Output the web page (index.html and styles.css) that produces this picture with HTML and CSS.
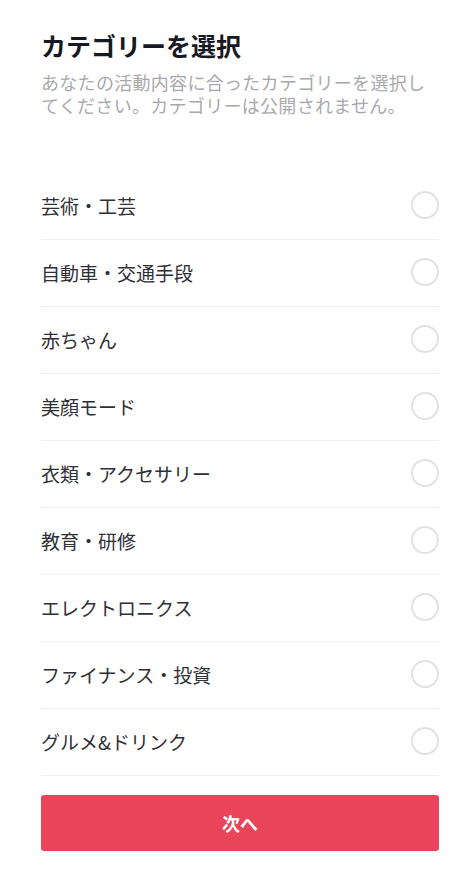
FILE: index.html
```html
<!DOCTYPE html>
<html lang="ja">
<head>
<meta charset="utf-8">
<link rel="stylesheet" href="styles.css">
</head>
<body>
<div class="page">
  <h1 class="title">カテゴリーを選択</h1>
  <p class="subtitle">あなたの活動内容に合ったカテゴリーを選択してください。カテゴリーは公開されません。</p>
  <ul class="list">
    <li class="row"><span class="label">芸術・工芸</span><span class="radio"></span></li>
    <li class="row"><span class="label">自動車・交通手段</span><span class="radio"></span></li>
    <li class="row"><span class="label">赤ちゃん</span><span class="radio"></span></li>
    <li class="row"><span class="label">美顔モード</span><span class="radio"></span></li>
    <li class="row"><span class="label">衣類・アクセサリー</span><span class="radio"></span></li>
    <li class="row"><span class="label">教育・研修</span><span class="radio"></span></li>
    <li class="row"><span class="label">エレクトロニクス</span><span class="radio"></span></li>
    <li class="row"><span class="label">ファイナンス・投資</span><span class="radio"></span></li>
    <li class="row"><span class="label">グルメ&amp;ドリンク</span><span class="radio"></span></li>
  </ul>
  <button class="next">次へ</button>
</div>
</body>
</html>
```
FILE: styles.css
```css
* { box-sizing: border-box; }
html, body {
  margin: 0;
  padding: 0;
  background: #ffffff;
  font-family: "Noto Sans CJK JP", "Noto Sans", sans-serif;
}
.page {
  width: 464px;
  padding: 30px 25px 0 41px;
}
.title {
  margin: 0;
  font-size: 25px;
  line-height: 30px;
  font-weight: 700;
  color: #161823;
}
.subtitle {
  margin: 11px 0 0;
  font-size: 18px;
  line-height: 23px;
  color: #a9a9ad;
  letter-spacing: 0.3px;
}
.list {
  list-style: none;
  margin: 56px 0 0;
  padding: 0;
}
.row {
  height: 67px;
  display: flex;
  align-items: center;
  justify-content: space-between;
  border-bottom: 1px solid #efeff0;
  padding-bottom: 2px;
}
.label {
  font-size: 19px;
  color: #2f3036;
}
.radio {
  width: 28px;
  height: 28px;
  border-radius: 50%;
  border: 2px solid #e2e2e4;
}
.next {
  display: block;
  width: 100%;
  height: 56px;
  margin-top: 19px;
  border: none;
  border-radius: 3px;
  background: #ea445a;
  color: #ffffff;
  font-family: inherit;
  font-size: 18px;
  font-weight: 700;
}
```
